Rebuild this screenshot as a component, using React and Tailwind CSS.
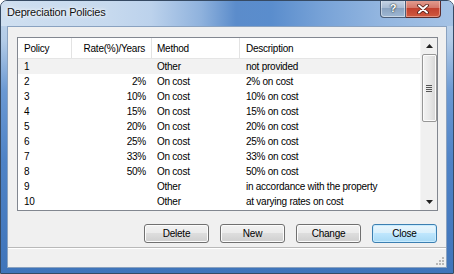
import React from "react";

const rows = [
  ["1", "", "Other", "not provided"],
  ["2", "2%", "On cost", "2% on cost"],
  ["3", "10%", "On cost", "10% on cost"],
  ["4", "15%", "On cost", "15% on cost"],
  ["5", "20%", "On cost", "20% on cost"],
  ["6", "25%", "On cost", "25% on cost"],
  ["7", "33%", "On cost", "33% on cost"],
  ["8", "50%", "On cost", "50% on cost"],
  ["9", "", "Other", "in accordance with the property"],
  ["10", "", "Other", "at varying rates on cost"],
];

function Btn({ children, primary }) {
  return (
    <div
      className={
        "w-[65px] h-[19px] rounded-[3px] border flex items-center justify-center text-[10px] tracking-[-0.25px] text-black " +
        (primary
          ? "border-[#3c7fb1] bg-[linear-gradient(to_bottom,#eaf6fd_0%,#d9f0fc_45%,#bee6fd_50%,#a7d9f5_100%)] shadow-[inset_0_0_0_1px_#c8ecff]"
          : "border-[#707070] bg-[linear-gradient(to_bottom,#f2f2f2_0%,#ebebeb_45%,#dddddd_50%,#cfcfcf_100%)] shadow-[inset_0_0_0_1px_#fcfcfc]")
      }
    >
      {children}
    </div>
  );
}

export default function App() {
  return (
    <div className="w-[454px] h-[274px] overflow-hidden font-['Liberation_Sans',Arial,sans-serif]">
      <div className="w-[454px] h-[274px] rounded-t-[7px] border border-[#364a63] flex flex-col relative overflow-hidden bg-[linear-gradient(to_bottom,#c5d8ed_0px,#b2cbe7_40px,#6b99d3_90px,#4f83c6_160px,#3f74ba_274px)]">
        {/* title bar */}
        <div className="h-[25px] shrink-0 flex items-center pl-[6px] relative bg-[linear-gradient(to_right,#cfdff0_0px,#c6d9ee_110px,#bcd2ec_150px,#8fb2dd_200px,#5b8ccb_235px,#5a8dcd_270px,#77a2d7_320px,#93b6e0_380px,#a4c2e5_452px)]">
          <span className="text-[11px] tracking-[-0.2px] text-[#111] [text-shadow:0_0_6px_#fff,0_0_3px_#fff] mt-[-2px]">
            Depreciation Policies
          </span>
          <div className="absolute top-[-1px] right-[12px] flex">
            <div className="w-[26px] h-[18px] rounded-bl-[4px] border border-t-0 border-[#4a5d78] bg-[linear-gradient(to_bottom,#c9d6e6_0%,#a9bcd4_45%,#8aa3c1_50%,#9fb8d3_100%)] shadow-[inset_0_0_0_1px_rgba(255,255,255,0.45)] flex items-center justify-center">
              <span className="text-[11px] font-bold text-white [text-shadow:0_0_1px_#233,0_0_2px_#233] leading-none">?</span>
            </div>
            <div className="w-[35px] h-[18px] rounded-br-[4px] border border-t-0 border-l-0 border-[#5a2b2b] bg-[linear-gradient(to_bottom,#e3a093_0%,#d4786a_45%,#c2412f_50%,#cf5a3f_100%)] shadow-[inset_0_0_0_1px_rgba(255,220,210,0.45)] flex items-center justify-center">
              <svg width="12" height="10" viewBox="0 0 12 10">
                <path d="M2 1.5 L10 8.5 M10 1.5 L2 8.5" stroke="#4a1a14" strokeWidth="3.6" strokeLinecap="round" />
                <path d="M2 1.5 L10 8.5 M10 1.5 L2 8.5" stroke="#ffffff" strokeWidth="2" strokeLinecap="round" />
              </svg>
            </div>
          </div>
        </div>

        {/* inner panel */}
        <div className="mx-[6px] h-[242px] border border-[#8aa2c0] bg-[#f0f0f0] flex flex-col">
          {/* list box */}
          <div className="mt-[10px] ml-[9px] w-[421px] h-[174px] border border-[#828790] bg-white flex text-[10px] tracking-[-0.25px] text-black">
            <div className="flex-1 flex flex-col">
              {/* header */}
              <div className="h-[21px] flex border-b border-[#e5e5e5] items-center">
                <div className="w-[54px] h-full pl-[6px] flex items-center border-r border-[#e3e3e3]">Policy</div>
                <div className="w-[80px] h-full pr-[6px] flex items-center justify-end border-r border-[#e3e3e3]">Rate(%)/Years</div>
                <div className="w-[88px] h-full pl-[5px] flex items-center border-r border-[#e3e3e3]">Method</div>
                <div className="flex-1 h-full pl-[6px] flex items-center">Description</div>
              </div>
              {rows.map((r, i) => (
                <div key={i} className={"h-[15px] flex items-center leading-[15px] " + (i === 0 ? "bg-[#f2f2f2]" : "")}>
                  <div className="w-[54px] pl-[6px]">{r[0]}</div>
                  <div className="w-[80px] pr-[6px] text-right">{r[1]}</div>
                  <div className="w-[88px] pl-[5px]">{r[2]}</div>
                  <div className="flex-1 pl-[6px] whitespace-nowrap">{r[3]}</div>
                </div>
              ))}
            </div>
            {/* scrollbar */}
            <div className="w-[17px] h-full bg-[#f0f0f0] border-l border-[#f6f6f6] flex flex-col items-center">
              <div className="h-[16px] w-full flex items-center justify-center">
                <svg width="7" height="4" viewBox="0 0 7 4"><path d="M0 4 L3.5 0 L7 4 Z" fill="#222" /></svg>
              </div>
              <div className="w-[15px] h-[68px] rounded-[2px] border border-[#979797] bg-[linear-gradient(to_right,#f3f3f3,#e8e8e8_50%,#d6d6d6)] shadow-[inset_0_0_0_1px_#fbfbfb] flex flex-col items-center justify-center gap-[1px]">
                <div className="w-[6px] h-[1px] bg-[#555]" />
                <div className="w-[6px] h-[1px] bg-[#555]" />
                <div className="w-[6px] h-[1px] bg-[#555]" />
                <div className="w-[6px] h-[1px] bg-[#555]" />
              </div>
              <div className="flex-1" />
              <div className="h-[16px] w-full flex items-center justify-center">
                <svg width="7" height="4" viewBox="0 0 7 4"><path d="M0 0 L3.5 4 L7 0 Z" fill="#222" /></svg>
              </div>
            </div>
          </div>

          {/* buttons */}
          <div className="mt-[13px] mr-[9px] flex justify-end gap-[11px]">
            <Btn>Delete</Btn>
            <Btn>New</Btn>
            <Btn>Change</Btn>
            <Btn primary>Close</Btn>
          </div>

          {/* status bar */}
          <div className="mt-auto h-[20px] border-t border-[#b9b9b9] shadow-[inset_0_1px_0_#ffffff] bg-[#f0f0f0] flex justify-end items-end pr-[1px] pb-[1px]">
            <svg width="10" height="10" viewBox="0 0 10 10">
              <rect x="7" y="1" width="2" height="2" fill="#b8b8b8" />
              <rect x="4" y="4" width="2" height="2" fill="#b8b8b8" />
              <rect x="7" y="4" width="2" height="2" fill="#b8b8b8" />
              <rect x="1" y="7" width="2" height="2" fill="#b8b8b8" />
              <rect x="4" y="7" width="2" height="2" fill="#b8b8b8" />
              <rect x="7" y="7" width="2" height="2" fill="#b8b8b8" />
            </svg>
          </div>
        </div>
      </div>
    </div>
  );
}
